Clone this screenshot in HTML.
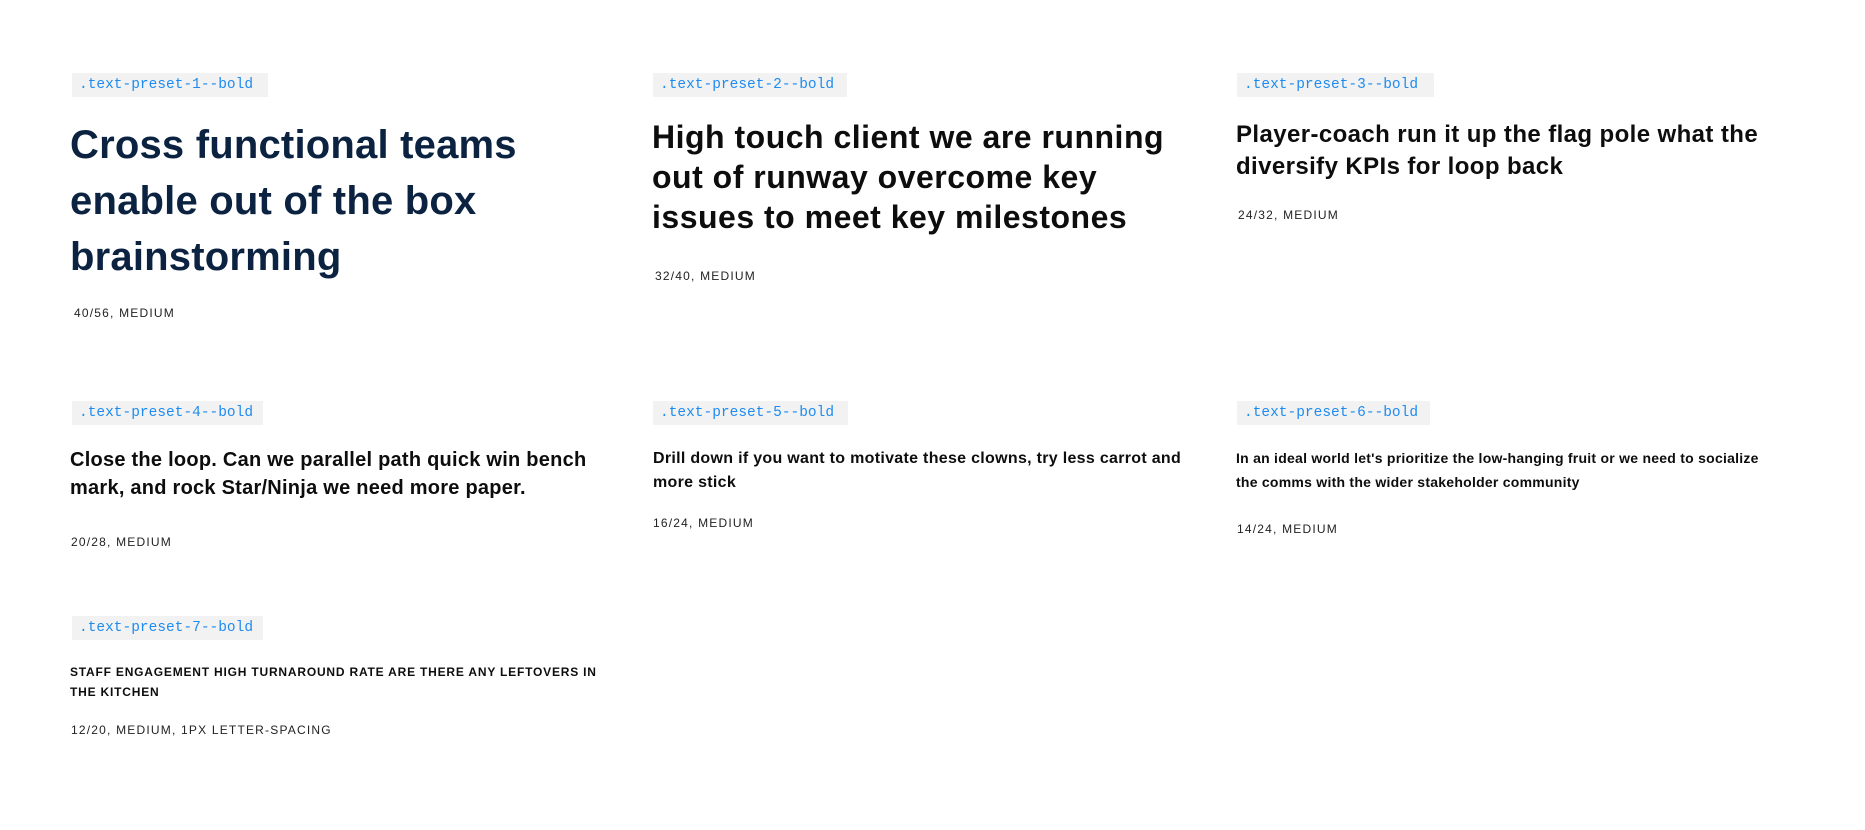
<!DOCTYPE html>
<html><head><meta charset="utf-8"><style>
html,body{margin:0;padding:0;background:#fff;width:1865px;height:830px;overflow:hidden;position:relative}
.t{position:absolute;height:24px;background:#f2f2f2;font-family:"Liberation Mono",monospace;font-size:14.5px;line-height:24px;color:#1e8bf0;padding:0 7px;box-sizing:border-box;white-space:nowrap}
.h{position:absolute;font-family:"Liberation Sans",sans-serif;font-weight:bold;color:#0d0d0d;white-space:nowrap}
.c{position:absolute;font-family:"Liberation Sans",sans-serif;font-size:12px;letter-spacing:1.2px;color:#222;white-space:nowrap;line-height:20px}
</style></head><body>
<div class="t" style="left:72px;top:73px;width:196px">.text-preset-1--bold</div>
<div class="h" style="left:70px;top:117px;font-size:40px;line-height:56px;color:#0b2341;letter-spacing:0.2px">Cross functional teams<br>enable out of the box<br>brainstorming</div>
<div class="c" style="left:74px;top:303px">40/56, MEDIUM</div>

<div class="t" style="left:653px;top:73px;width:194px">.text-preset-2--bold</div>
<div class="h" style="left:652px;top:117px;font-size:32px;line-height:40px;letter-spacing:0.5px">High touch client we are running<br>out of runway overcome key<br>issues to meet key milestones</div>
<div class="c" style="left:655px;top:266px">32/40, MEDIUM</div>

<div class="t" style="left:1237px;top:73px;width:197px">.text-preset-3--bold</div>
<div class="h" style="left:1236px;top:119px;font-size:24px;line-height:32px;letter-spacing:0.4px">Player-coach run it up the flag pole what the<br>diversify KPIs for loop back</div>
<div class="c" style="left:1238px;top:205px">24/32, MEDIUM</div>

<div class="t" style="left:72px;top:401px;width:191px">.text-preset-4--bold</div>
<div class="h" style="left:70px;top:446px;font-size:20px;line-height:28px;letter-spacing:0.25px">Close the loop. Can we parallel path quick win bench<br>mark, and rock Star/Ninja we need more paper.</div>
<div class="c" style="left:71px;top:532px">20/28, MEDIUM</div>

<div class="t" style="left:653px;top:401px;width:195px">.text-preset-5--bold</div>
<div class="h" style="left:653px;top:447px;font-size:16px;line-height:24px;letter-spacing:0.3px">Drill down if you want to motivate these clowns, try less carrot and<br>more stick</div>
<div class="c" style="left:653px;top:513px">16/24, MEDIUM</div>

<div class="t" style="left:1237px;top:401px;width:193px">.text-preset-6--bold</div>
<div class="h" style="left:1236px;top:446px;font-size:14px;line-height:24px;letter-spacing:0.25px">In an ideal world let's prioritize the low-hanging fruit or we need to socialize<br>the comms with the wider stakeholder community</div>
<div class="c" style="left:1237px;top:519px">14/24, MEDIUM</div>

<div class="t" style="left:72px;top:616px;width:191px">.text-preset-7--bold</div>
<div class="h" style="left:70px;top:662px;font-size:12px;line-height:20px;letter-spacing:0.8px">STAFF ENGAGEMENT HIGH TURNAROUND RATE ARE THERE ANY LEFTOVERS IN<br>THE KITCHEN</div>
<div class="c" style="left:71px;top:720px">12/20, MEDIUM, 1PX LETTER-SPACING</div>
</body></html>
